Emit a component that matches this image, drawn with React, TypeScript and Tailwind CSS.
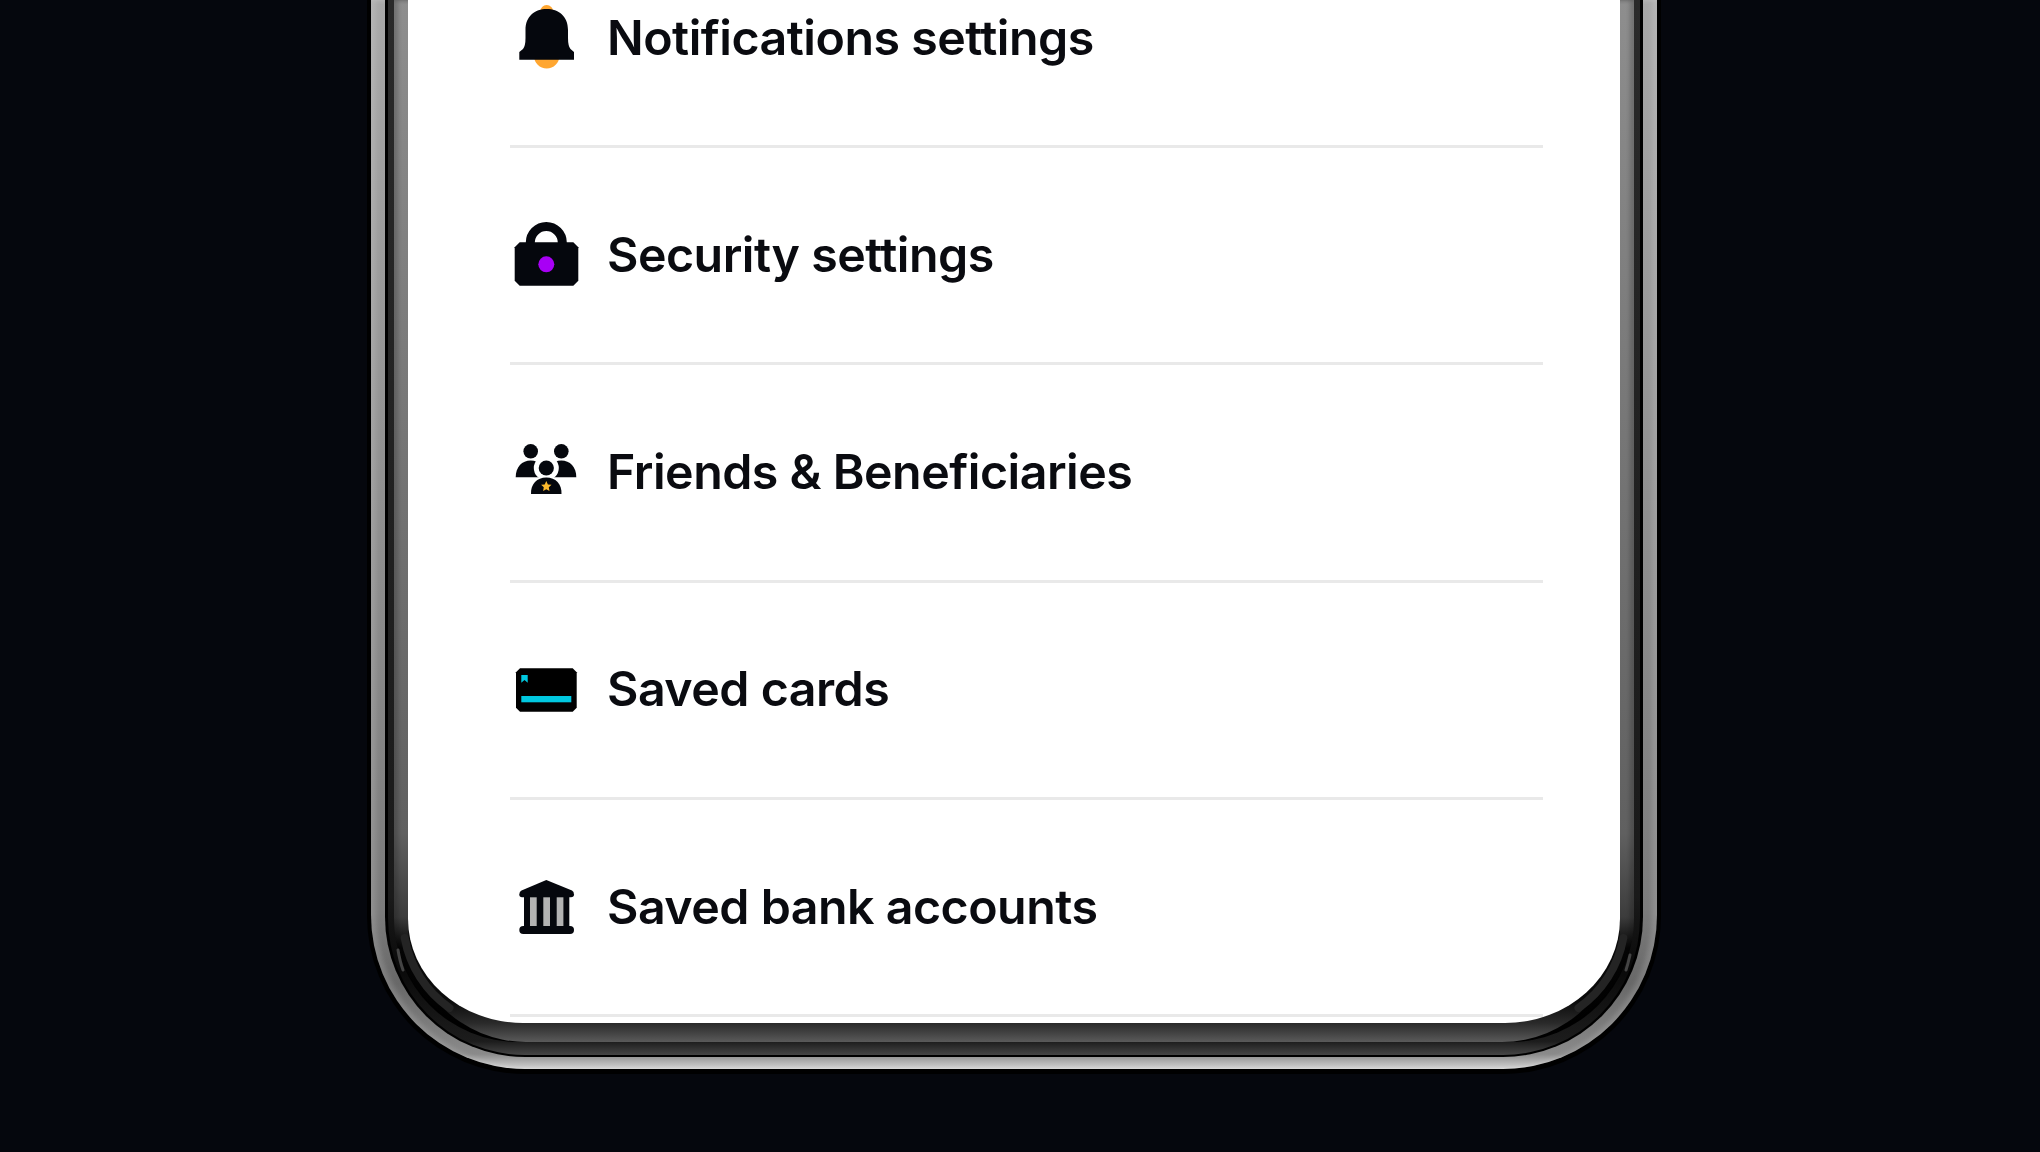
import React from "react";

const BellIcon = () => (
  <svg width="72" height="72" viewBox="0 0 72 72">
    <circle cx="36.7" cy="9.5" r="6.5" fill="#ffa630" />
    <circle cx="36.7" cy="53.7" r="12.7" fill="#ffa630" />
    <path
      d="M9.3 57.7V50L13 47Q15.5 44 15.5 36V28C15.5 14 25 7 36.7 7C48.5 7 58 14 58 28V36Q58 44 60.5 47L64 50V57.7Z"
      fill="#05070d"
    />
  </svg>
);

const LockIcon = () => (
  <svg width="72" height="72" viewBox="0 0 72 72">
    <path d="M20.3 26V23.6A16 16 0 0 1 52.3 23.6V26" fill="none" stroke="#05070d" strokeWidth="9" />
    <path d="M9.7 23.3H63.3L68.3 28.3V61.7L63.3 66.7H9.7L4.7 61.7V28.3Z" fill="#05070d" />
    <circle cx="36.3" cy="45.3" r="8" fill="#a800f5" />
  </svg>
);

const FriendsIcon = () => (
  <svg width="72" height="72" viewBox="0 0 72 72">
    <circle cx="20.7" cy="15.3" r="7.3" fill="#05070d" />
    <circle cx="51.3" cy="15.3" r="7.3" fill="#05070d" />
    <path d="M5.7 41.3C5.7 31 12 24.5 20.7 24.5S35.7 31 35.7 41.3Z" fill="#05070d" />
    <path d="M36.3 41.3C36.3 31 42.6 24.5 51.3 24.5S66.3 31 66.3 41.3Z" fill="#05070d" />
    <circle cx="36.3" cy="32" r="12.5" fill="#fff" />
    <path d="M16 60V44H56V60Z" fill="#fff" />
    <circle cx="36.3" cy="32" r="7.6" fill="#05070d" />
    <path d="M21 58C20.5 48 27 41.5 36.3 41.5S52 48 51.5 58Z" fill="#05070d" />
    <path
      d="M36.3 45L37.9 48.4L41.5 48.8L38.8 51.3L39.5 55L36.3 53.2L33.1 55L33.8 51.3L31.1 48.8L34.7 48.4Z"
      fill="#fcb92c"
    />
  </svg>
);

const CardIcon = () => (
  <svg width="72" height="72" viewBox="0 0 72 72">
    <path d="M10 14.3H62.7L66.7 18.3V53.7L62.7 57.7H10L6 53.7V18.3Z" fill="#000" />
    <rect x="11.3" y="42" width="50" height="6.3" fill="#00c8e0" />
    <path d="M11.3 21H17.7V28.7L14.5 26L11.3 28.7Z" fill="#00c8e0" />
  </svg>
);

const BankIcon = () => (
  <svg width="72" height="72" viewBox="0 0 72 72">
    <path d="M36.3 9L62 19.5Q64 20.5 64 23.5Q64 26.3 61 26.3H12Q9.3 26.3 9.3 23.5Q9.3 20.5 11.5 19.5Z" fill="#05070d" />
    <rect x="14" y="24" width="45.3" height="33" fill="#05070d" />
    <rect x="9.3" y="55" width="54.7" height="8" rx="4" fill="#05070d" />
    <rect x="20" y="26.3" width="6.7" height="28.7" fill="#b3b3b3" />
    <rect x="33.3" y="26.3" width="6.7" height="28.7" fill="#b3b3b3" />
    <rect x="46.7" y="26.3" width="6.7" height="28.7" fill="#b3b3b3" />
  </svg>
);

const rows = [
  { label: "Notifications settings", icon: <BellIcon /> },
  { label: "Security settings", icon: <LockIcon /> },
  { label: "Friends & Beneficiaries", icon: <FriendsIcon /> },
  { label: "Saved cards", icon: <CardIcon /> },
  { label: "Saved bank accounts", icon: <BankIcon /> },
];

const App: React.FC = () => {
  return (
    <div className="h-[1152px] w-[2040px] overflow-hidden bg-[#05070d] pl-[367px] font-['Inter',sans-serif]">
      {/* phone frame: nested rings, cut off at the top of the page */}
      <div className="relative h-[1074px] w-[1294px] rounded-b-[158px] bg-black px-[4px] pb-[5px]">
        <div className="h-full rounded-b-[154px] bg-[linear-gradient(to_bottom,#a8a8a8_0%,#7c7c7c_85%,#686868_92%,#8a8a8a_98.6%,#d4d4d4_100%)] px-[14px] pb-[12px] shadow-[inset_5px_0_5px_rgba(255,255,255,0.15),inset_-5px_0_5px_rgba(255,255,255,0.15)]">
          <div className="h-full rounded-b-[140px] bg-black px-[3px] pb-[2px]">
            <div className="h-full rounded-b-[137px] bg-[linear-gradient(to_bottom,#2a2a2a_0%,#1a1a1a_85%,#0a0a0a_92%,#1c1c1c_98.7%,#464646_100%)] px-[6px] pb-[13px]">
              <div className="h-full rounded-b-[124px] bg-[linear-gradient(to_bottom,#8e8e8e_0%,#606060_80%,#3c3c3c_88%,#050505_91%,#000000_100%)] px-[14px] shadow-[inset_4px_0_4px_rgba(0,0,0,0.2),inset_-4px_0_4px_rgba(0,0,0,0.2)]">
                <div className="h-full rounded-b-[118px] bg-[linear-gradient(to_bottom,#000000_0%,#0a0a0a_96%,#2a2a2a_98.2%,#5a5a5a_100%)] pb-[19px]">
                  <div className="h-full overflow-hidden rounded-bl-[115px_104px] rounded-br-[115px_104px] bg-white pl-[102px] pr-[77px]">
                    <div className="-mt-[69px]">
                      {rows.map((row) => (
                        <div
                          key={row.label}
                          className="flex h-[217.2px] items-center gap-[25px] border-b-[3px] border-[#e9e9e9]"
                        >
                          {row.icon}
                          <span className="text-[48.3px] font-semibold tracking-[-0.5px] text-[#0a0b10]">
                            {row.label}
                          </span>
                        </div>
                      ))}
                    </div>
                  </div>
                </div>
              </div>
            </div>
          </div>
        </div>
        {/* glass reflections on the lower corners */}
        <svg className="absolute left-0 top-0" width="1294" height="1074" viewBox="367 0 1294 1074" fill="none">
          <path d="M404.7 938A109 109 0 0 0 449.5 1008" stroke="#242424" strokeWidth="8" strokeLinecap="round" />
          <path d="M1623.3 938A109 109 0 0 1 1578.5 1008" stroke="#242424" strokeWidth="8" strokeLinecap="round" />
          <path d="M398 950Q400 962 403 970" stroke="#444444" strokeWidth="3" strokeLinecap="round" />
          <path d="M1630 955Q1628 964 1626 970" stroke="#444444" strokeWidth="3" strokeLinecap="round" />
        </svg>
      </div>
    </div>
  );
};

export default App;
